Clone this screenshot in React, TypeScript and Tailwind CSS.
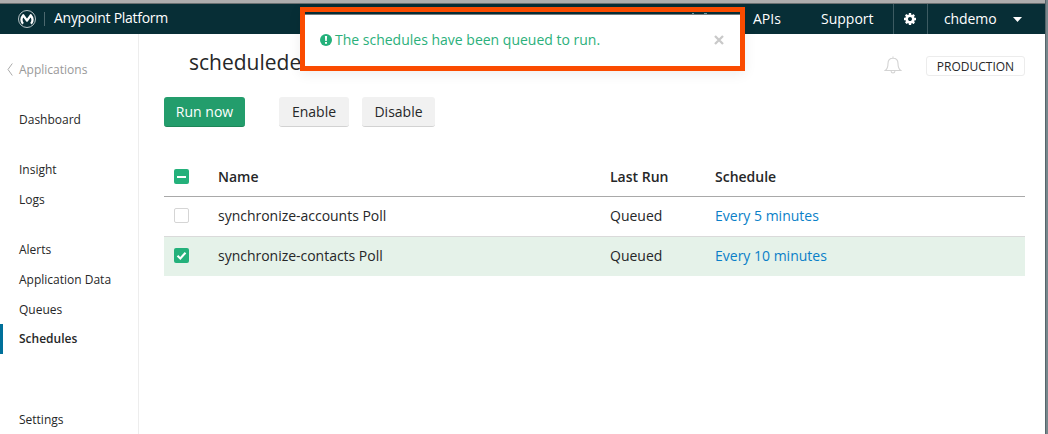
import React from "react";

const navGroups: { gap: string; items: string[] }[] = [
  { gap: "mt-5", items: ["Dashboard"] },
  { gap: "mt-5", items: ["Insight", "Logs"] },
  { gap: "mt-5", items: ["Alerts", "Application Data", "Queues", "Schedules"] },
  { gap: "mt-[51px]", items: ["Settings"] },
];

const rows = [
  { name: "synchronize-accounts Poll", schedule: "Every 5 minutes", checked: false },
  { name: "synchronize-contacts Poll", schedule: "Every 10 minutes", checked: true },
];

function Logo() {
  return (
    <svg width="20" height="20" viewBox="0 0 20 20" fill="none">
      <circle cx="10" cy="10" r="8.500" stroke="#b8c3c6" strokeWidth="1" />
      <path
        d="M6 14.800C3.800 12.600 4 8.800 6.300 6.300L10 11.600L13.700 6.300C16 8.800 16.200 12.600 14 14.800"
        stroke="#fff"
        strokeWidth="2.300"
        strokeLinejoin="round"
      />
    </svg>
  );
}

function Gear() {
  return (
    <svg className="-ml-px" width="12" height="12" viewBox="0 0 1536 1536" fill="#fff">
      <path d="M1024 768q0-106-75-181t-181-75-181 75-75 181 75 181 181 75 181-75 75-181zm512-109v222q0 12-8 23t-20 13l-185 28q-19 54-39 91 35 50 107 138 10 12 10 25t-9 23q-27 37-99 108t-94 71q-12 0-26-9l-138-108q-44 23-91 38-16 136-29 186-7 28-36 28H657q-14 0-24.500-8.500T621 1506l-28-184q-49-16-90-37l-141 107q-10 9-25 9-14 0-25-11-126-114-165-168-7-10-7-23 0-12 8-23 15-21 51-66.500t54-70.500q-27-50-41-99L29 913q-13-2-21-12.500T0 877V655q0-12 8-23t19-13l186-28q14-46 39-92-40-57-107-138-10-12-10-24 0-10 9-23 26-36 98.500-107.500T337 135q13 0 26 10l138 107q44-23 91-38 16-136 29-186 7-28 36-28h222q14 0 24.500 8.500T915 30l28 184q49 16 90 37l142-107q9-9 24-9 13 0 25 10 129 119 165 170 7 8 7 22 0 12-8 23-15 21-51 66.500t-54 70.500q26 50 41 98l183 28q13 2 21 12.500t8 23.500z" />
    </svg>
  );
}

function Checkbox({ state }: { state: "on" | "off" | "mixed" }) {
  if (state === "off") {
    return <span className="block size-[15px] rounded-[2px] border border-[#d5d5d5] bg-white" />;
  }
  return (
    <span className="block size-[15px] rounded-[2px] bg-[#24b17b]">
      <svg width="15" height="15" viewBox="0 0 15 15" fill="none" stroke="#fff">
        {state === "mixed" ? (
          <path d="M3 8H12" strokeWidth="2" />
        ) : (
          <path d="M3.500 7.800L6.300 10.400L11.500 4.700" strokeWidth="2.100" />
        )}
      </svg>
    </span>
  );
}

export default function App() {
  return (
    <div className="relative flex h-[434px] w-[1048px] overflow-hidden bg-white font-['Open_Sans',sans-serif] text-[#262728]">
      <div className="flex w-[1045px] shrink-0 flex-col">
        <div className="h-1 shrink-0 border-b border-[#6b7071] bg-[#aeaeae]" />
        <header className="flex h-[30px] shrink-0 items-center bg-[#072e36] text-sm font-medium text-white">
          <div className="ml-[17px] flex h-[30px] w-[27px] items-center">
            <Logo />
          </div>
          <span className="h-[14px] w-px bg-[#4c686e]" />
          <span className="ml-[9px] -mt-0.5 tracking-[-0.28px]">Anypoint Platform</span>
          <div className="ml-auto flex h-full items-center">
            <span className="w-[68px]">APIs</span>
            <span className="w-[72px]">Support</span>
            <span className="flex h-full w-[34px] shrink-0 items-center justify-center border-l border-[#3c5b62]">
              <Gear />
            </span>
            <span className="flex h-full w-[118px] shrink-0 items-center border-l border-[#3c5b62] pl-4">
              <span className="w-[53px] tracking-[-0.1px]">chdemo</span>
              <svg className="ml-4" width="9" height="5" viewBox="0 0 9 5" fill="#fff">
                <path d="M0 0H9L4.500 5Z" />
              </svg>
            </span>
          </div>
        </header>

        <div className="flex min-h-0 flex-1">
          <nav className="w-[139px] shrink-0 border-r border-[#ededed] pt-5 text-xs">
            <div className="flex h-[30px] items-center pl-[7px] pt-px text-[#999]">
              <svg width="6" height="13" viewBox="0 0 6 13" fill="none" stroke="#aaa">
                <path d="M5.300 .5L1 6.500L5.300 12.500" />
              </svg>
              <span className="ml-1.5">Applications</span>
            </div>
            {navGroups.map((group) => (
              <div key={group.items[0]} className={group.gap}>
                {group.items.map((item) => (
                  <div
                    key={item}
                    className={
                      item === "Schedules"
                        ? "flex h-[30px] items-center border-l-[3px] border-[#00709a] pl-4 font-semibold"
                        : item === "Settings"
                          ? "flex h-[30px] items-center pl-[19px]"
                          : "flex h-[30px] items-center pl-[19px] pt-0.5"
                    }
                  >
                    {item}
                  </div>
                ))}
              </div>
            ))}
          </nav>

          <main className="ml-[25px] w-[861px] text-sm">
            <div className="flex h-[63px] items-start">
              <h1 className="ml-[25px] mt-[14px] text-[21px] leading-7">scheduledemo</h1>
              <svg className="ml-auto mt-[22px]" width="18" height="18" viewBox="0 0 18 18" fill="none" stroke="#d3d3d3" strokeWidth="1.100">
                <path d="M9 .5V2M1.200 14.500Q4 12.500 4 7.500Q4 2.200 9 2.200Q14 2.200 14 7.500Q14 12.500 16.800 14.500Z" />
                <path d="M7 15.200Q7.300 17 9 17Q10.700 17 11 15.200" />
              </svg>
              <span className="ml-6 mt-[22px] flex h-5 w-[99px] items-center justify-center rounded-[3px] border border-[#ececec] pt-0.5 text-xs">
                PRODUCTION
              </span>
            </div>
            <div className="flex h-[30px] text-[14px]">
              <button className="w-[81px] rounded-[3px] border-b border-[#1d8658] bg-[#239d6c] font-medium text-white">Run now</button>
              <button className="ml-[34px] w-[70px] rounded-[3px] border-b border-[#d2d2d2] bg-[#f1f1f1]">Enable</button>
              <button className="ml-[13px] w-[73px] rounded-[3px] border-b border-[#d2d2d2] bg-[#f1f1f1]">Disable</button>
            </div>
            <div className="mt-[30px]">
              <div className="grid h-10 grid-cols-[54px_392px_105px_1fr] items-center border-b border-[#a9a9a9] font-semibold">
                <span className="pl-2.5"><Checkbox state="mixed" /></span>
                <span>Name</span>
                <span>Last Run</span>
                <span>Schedule</span>
              </div>
              {rows.map((row) => (
                <div
                  key={row.name}
                  className={
                    row.checked
                      ? "grid h-[39px] grid-cols-[54px_392px_105px_1fr] items-center bg-[#e5f2e9] pb-px"
                      : "grid h-10 grid-cols-[54px_392px_105px_1fr] items-center border-b border-[#dadada] pb-px"
                  }
                >
                  <span className="pb-px pl-2.5"><Checkbox state={row.checked ? "on" : "off"} /></span>
                  <span className="tracking-[-0.02px]">{row.name}</span>
                  <span>Queued</span>
                  <a className="text-[#0a7fc8]">{row.schedule}</a>
                </div>
              ))}
            </div>
          </main>
        </div>
      </div>
      <div className="w-[3px] shrink-0 border-l border-[#56666b] bg-[#77878c]" />

      <div className="absolute left-[300px] top-[7px] flex h-16 w-[445px] flex-col border-5 border-[#fa4b00] bg-white shadow-[0_3px_12px_rgba(0,0,0,0.07)]">
        <div className="flex h-[3px] shrink-0 items-end border-b border-[#747b7d] bg-[#072e36] pl-[387px]">
          <span className="h-px w-0.5 bg-[#6e969d]" />
          <span className="ml-2.5 h-px w-[3px] bg-[#6e969d]" />
        </div>
        <div className="flex flex-1 items-center pb-px pl-[15px] pr-4 text-sm text-[#2bb07b]">
          <svg width="12" height="12" viewBox="0 0 12 12">
            <circle cx="6" cy="6" r="6" fill="#24b17b" />
            <path d="M4.900 2H7.100L6.800 7H5.200ZM5 8H7V9.800H5Z" fill="#fff" />
          </svg>
          <span className="ml-[3px] -mt-px">The schedules have been queued to run.</span>
          <svg className="ml-auto" width="10" height="10" viewBox="0 0 10 10" stroke="#c9c9c9" strokeWidth="2.300">
            <path d="M1 1L9 9M9 1L1 9" />
          </svg>
        </div>
      </div>
    </div>
  );
}
